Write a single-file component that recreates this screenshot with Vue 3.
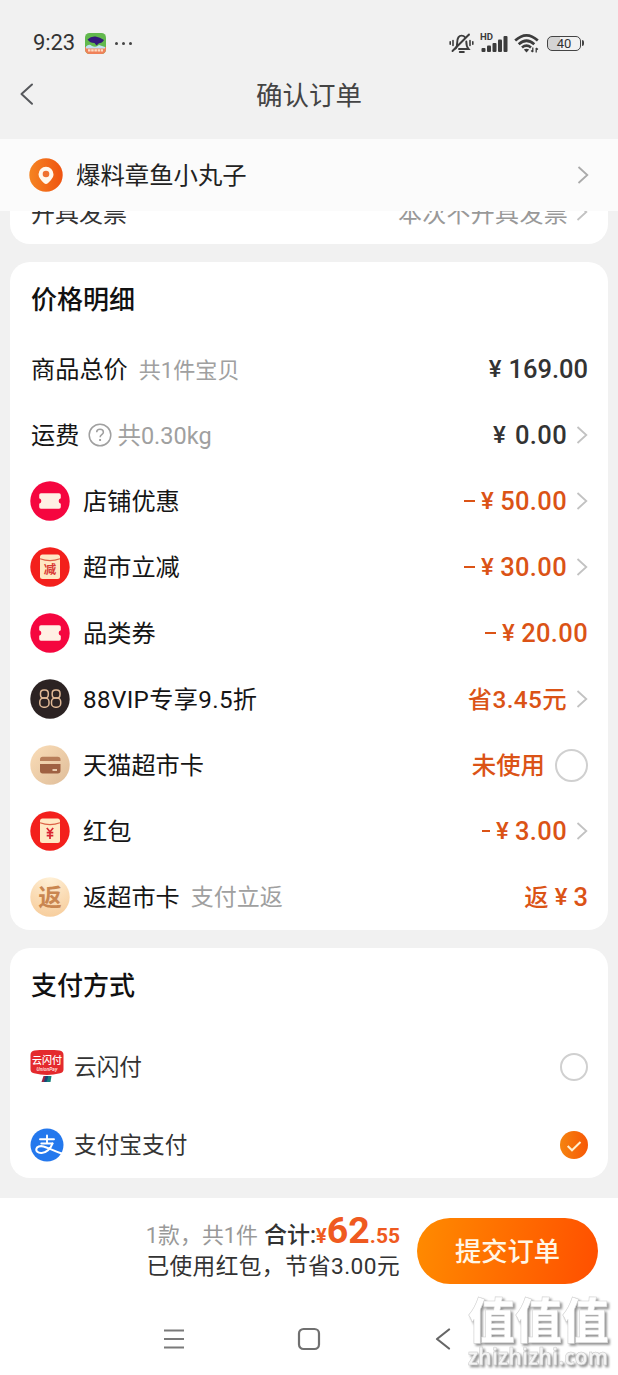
<script setup>
const rows = [
  { label: '商品总价', note: '共1件宝贝', snug: true, yen: true, amount: '169.00', dark: true },
  { label: '运费', help: true, note: '共0.30kg', yen: true, amount: '0.00', dark: true, arrow: true, spread: true },
  { icon: 'ticket', label: '店铺优惠', minus: true, yen: true, amount: '50.00', arrow: true, spread: true },
  { icon: 'jian', label: '超市立减', minus: true, yen: true, amount: '30.00', arrow: true, spread: true },
  { icon: 'ticket', label: '品类券', minus: true, yen: true, amount: '20.00', spread: true },
  { icon: 'vip', label: '88VIP专享9.5折', wide: true, text: '省3.45元', arrow: true, spread: true },
  { icon: 'card', label: '天猫超市卡', text: '未使用', radio: true },
  { icon: 'hongbao', label: '红包', minus: true, yen: true, amount: '3.00', arrow: true, tight: true, spread: true },
  { icon: 'fan', label: '返超市卡', note: '支付立返', text: '返', yen: true, amount: '3', rebate: true },
]
</script>

<template>
  <div class="screen">
    <header class="status">
      <span class="time">9:23</span>
      <svg class="app-icon" width="21" height="21" viewBox="0 0 21 21">
        <rect width="21" height="21" rx="4.500" fill="#62b84e" />
        <path d="M0 14h21v2.500a4.500 4.500 0 0 1-4.500 4.500h-12a4.500 4.500 0 0 1-4.500-4.500z" fill="#f0825a" />
        <path d="M1 13.500q3-3 6-.5 4 2 7-1l6 2v1.500H1z" fill="#bfe0f2" />
        <path d="M2.500 6.500Q6 3 10.500 3.500T19 7q-2 3.300-5 3.300l-2.500 2.200-2-2.500Q5 10 2.500 6.500z" fill="#33187a" />
        <path d="M3 17.300h15" stroke="#fbdcc4" stroke-width="2.200" stroke-dasharray="2.500 .7" />
      </svg>
      <span class="more"><i></i><i></i><i></i></span>
      <div class="status-right">
        <svg width="25" height="22" viewBox="0 0 25 22" fill="none" stroke="#3c3c3c" stroke-width="1.900" stroke-linecap="round">
          <path d="M6.500 16.500c1.600-1.400 1.700-3 1.700-6C8.200 6 9.900 3.600 12.600 3.600c1.500 0 2.600.6 3.400 1.700M17.300 9.500c0 4 .3 5.400 2.200 7.500H10" />
          <path d="M3.500 19 20 2.500" />
          <path d="M10.800 20h4" stroke-width="2" />
          <path d="M4 8.500v5M1.200 9.700v2.600M21 8.500v5M23.800 9.700v2.600" stroke-width="1.600" />
        </svg>
        <svg class="signal" width="28" height="22" viewBox="0 0 28 22" fill="#3c3c3c">
          <text x="0" y="8.300" font-size="9" font-weight="700" font-family="Roboto, sans-serif" textLength="13" lengthAdjust="spacingAndGlyphs">HD</text>
          <rect x="1.500" y="16" width="4" height="4" rx="1" />
          <rect x="7" y="13.500" width="4" height="6.500" rx="1" />
          <rect x="12.500" y="11" width="4" height="9" rx="1" />
          <rect x="18" y="7.500" width="4" height="12.500" rx="1" />
          <rect x="23.500" y="4" width="4" height="16" rx="1" />
        </svg>
        <svg class="wifi" width="26" height="22" viewBox="0 0 26 22" fill="none" stroke="#3c3c3c" stroke-width="2.700">
          <path d="M1.200 8.500Q12.500-1.800 23.800 8.500" />
          <path d="M4.700 12.200Q12.500 5.300 20.300 12.200" />
          <path d="M8 15.500Q12.500 11.800 17 15.500" />
          <path d="M9.800 17.600Q12.500 15.700 15.200 17.600L12.500 20.400z" fill="#3c3c3c" stroke="none" />
          <path d="M18.800 15.500v4.500M18.800 20l-1.700-1.500M22.200 20.400v-4.500M22.200 16l1.700 1.500" stroke-width="1.300" />
        </svg>
        <div class="battery"><span>40</span></div><i class="battery-tip"></i>
      </div>
    </header>

    <div class="nav">
      <svg class="back" width="16" height="24" viewBox="0 0 16 24" fill="none" stroke="#56585c" stroke-width="2" stroke-linecap="round" stroke-linejoin="round"><path d="M13 2.500 2.500 12 13 21.800" /></svg>
      <h1>确认订单</h1>
    </div>

    <section class="address">
      <svg width="34" height="34" viewBox="0 0 34 34">
        <defs><linearGradient id="pinFill" x1="0" x2="1"><stop offset="0" stop-color="#f58422" /><stop offset="1" stop-color="#ef5310" /></linearGradient></defs>
        <circle cx="17" cy="17" r="16.700" fill="url(#pinFill)" />
        <path d="M17 8.700a7.500 7.500 0 0 0-7.500 7.500c0 3.500 2.600 5.900 5.400 8.700q2.100 2 4.200 0c2.800-2.800 5.400-5.200 5.400-8.700A7.500 7.500 0 0 0 17 8.700z" fill="#fff8ee" />
        <circle cx="17" cy="16" r="3.300" fill="#ef7130" />
      </svg>
      <span class="address-name">爆料章鱼小丸子</span>
      <svg class="chev addr-chev" width="12" height="18" viewBox="0 0 12 18"><path d="M1.500 1 10.300 9 1.500 17" /></svg>
    </section>

    <section class="card invoice">
      <div class="invoice-row">
        <span>开具发票</span>
        <span class="invoice-value">本次不开具发票</span>
        <svg class="chev" width="12" height="18" viewBox="0 0 12 18"><path d="M1.500 1 10.300 9 1.500 17" /></svg>
      </div>
    </section>

    <section class="card prices">
      <h2>价格明细</h2>
      <div v-for="row in rows" :key="row.label" class="row">
        <svg v-if="row.icon" class="row-icon" width="40" height="40" viewBox="0 0 40 40">
          <template v-if="row.icon === 'ticket'">
            <circle cx="20" cy="20" r="19.700" fill="#f5063f" />
            <path d="M11 12.200h18a1.800 1.800 0 0 1 1.800 1.800v3.200a2.900 2.900 0 0 0 0 5.600V26a1.800 1.800 0 0 1-1.800 1.800H11A1.800 1.800 0 0 1 9.200 26v-3.200a2.900 2.900 0 0 0 0-5.600V14a1.800 1.800 0 0 1 1.800-1.800z" fill="#fff0e4" />
          </template>
          <template v-else-if="row.icon === 'jian' || row.icon === 'hongbao'">
            <circle cx="20" cy="20" r="19.700" fill="#f3201c" />
            <rect x="10" y="7.500" width="20" height="24.500" rx="2.500" fill="#ffe8c4" />
            <path d="M10 11.800q10 3.600 20 0" fill="none" stroke="#dc6045" stroke-width="1.200" />
            <text v-if="row.icon === 'jian'" x="20" y="27" class="packet-text">减</text>
            <path v-else d="M16.800 17 20 20.800 23.200 17M20 20.800V28M16.700 21.700h6.600M16.700 24.700h6.600" fill="none" stroke="#d92332" stroke-width="1.700" />
          </template>
          <template v-else-if="row.icon === 'vip'">
            <circle cx="20" cy="20" r="19.700" fill="#2c2323" />
            <g fill="none" stroke="#e0b996" stroke-width="1.500">
              <rect x="10.500" y="11" width="7.800" height="8" rx="3.300" /><rect x="9.800" y="19" width="9.200" height="9.200" rx="3.800" />
              <rect x="22.200" y="11" width="7.800" height="8" rx="3.300" /><rect x="21.500" y="19" width="9.200" height="9.200" rx="3.800" />
            </g>
          </template>
          <template v-else-if="row.icon === 'card'">
            <defs><linearGradient id="cardFill" x1="0" x2="1" y1="0" y2="1"><stop offset="0" stop-color="#faddb8" /><stop offset="1" stop-color="#dfbd99" /></linearGradient></defs>
            <circle cx="20" cy="20" r="19.700" fill="url(#cardFill)" />
            <path d="M10 16v-1.500a2.700 2.700 0 0 1 2.700-2.700h15.100a2.700 2.700 0 0 1 2.700 2.700V16z" fill="#b77d59" />
            <path d="M10 19h20.500v6.800a2.700 2.700 0 0 1-2.700 2.700H12.700a2.700 2.700 0 0 1-2.700-2.700z" fill="#9f6142" />
            <path d="M22.500 25h4.500" stroke="#f8dfc2" stroke-width="1.700" />
          </template>
          <template v-else>
            <defs><radialGradient id="fanFill" cx=".5" cy="0" r="1"><stop offset="0" stop-color="#fff0d6" /><stop offset="1" stop-color="#f7ce9e" /></radialGradient></defs>
            <circle cx="20" cy="20" r="19.700" fill="url(#fanFill)" />
            <text x="20" y="28.600" class="fan-text">返</text>
          </template>
        </svg>
        <span class="label" :class="{ wide: row.wide }">{{ row.label }}</span>
        <svg v-if="row.help" class="help" width="24" height="24" viewBox="0 0 24 24" fill="none" stroke="#a0a0a0" stroke-width="1.500">
          <circle cx="12" cy="12" r="10.800" />
          <path d="M8.700 9.300C8.700 7.300 10 6.300 12 6.300s3.400 1.100 3.400 2.900c0 2.300-3.300 2.600-3.300 5" /><path d="M12.100 16v2" stroke-width="1.900" />
        </svg>
        <span v-if="row.note" class="note" :class="{ 'after-help': row.help, snug: row.snug }">{{ row.note }}</span>
        <span class="value" :class="{ dark: row.dark, rebate: row.rebate, spread: row.spread }">
          <i v-if="row.minus" class="minus" :class="{ tight: row.tight }"></i>
          <b v-if="row.text" class="words">{{ row.text }}</b>
          <b v-if="row.yen" class="yen">¥</b>
          <b v-if="row.amount">{{ row.amount }}</b>
        </span>
        <svg v-if="row.arrow" class="chev" width="12" height="18" viewBox="0 0 12 18"><path d="M1.500 1 10.300 9 1.500 17" /></svg>
        <i v-if="row.radio" class="radio large"></i>
      </div>
    </section>

    <section class="card payment">
      <h2>支付方式</h2>
      <div class="pay-row first">
        <svg width="34" height="34" viewBox="0 0 34 34">
          <path d="M4.500.5Q17-1 29.500.5q4 .5 4 4.500v14.500q0 3-3.500 3.800Q17 26.500 4 23.300.5 22.500.5 19.500V5q0-4 4-4.500z" fill="#e42a2d" />
          <text x="17" y="14" class="union">云闪付</text>
          <text x="17" y="20.500" class="union-en">UnionPay</text>
          <path d="M13.500 26h3l-1 6h-4z" fill="#9d2540" /><path d="M15.500 26H19l-1 6h-4z" fill="#174579" /><path d="M18.500 26h3l-1 6h-4z" fill="#15807c" />
        </svg>
        <span>云闪付</span>
        <i class="radio"></i>
      </div>
      <div class="pay-row">
        <svg width="34" height="34" viewBox="0 0 34 34">
          <circle cx="17" cy="17" r="16.500" fill="#2478ed" />
          <g fill="none" stroke="#fff" stroke-linecap="round">
            <path d="M10 11.300h14M17 7.500v7.800M11.300 15.500h11.200" stroke-width="1.900" />
            <path d="M22.500 15.500C20.800 20.500 16 25.500 11 25c-3.300-.2-5-1.800-4.700-3.900.4-2.500 3.800-3.500 7.200-2.600 4.500 1.100 9.200 4.100 18.200 7" stroke-width="2.100" />
          </g>
        </svg>
        <span>支付宝支付</span>
        <svg class="checked" width="28" height="28" viewBox="0 0 28 28">
          <defs><linearGradient id="checkFill" x1="0" x2="1"><stop offset="0" stop-color="#f58410" /><stop offset="1" stop-color="#f75806" /></linearGradient></defs>
          <circle cx="14" cy="14" r="14" fill="url(#checkFill)" /><path d="M7.700 15 12 19.300 20.500 11" fill="none" stroke="#fff0d0" stroke-width="2" />
        </svg>
      </div>
    </section>

    <footer class="footer">
      <div class="checkout">
        <div class="summary">
          <p class="total"><span class="count">1款，共1件</span><span class="sum">合计:</span><b class="cur">¥</b><b class="big">62</b><b class="cents">.55</b></p>
          <p class="saved">已使用红包，节省3.00元</p>
        </div>
        <button class="submit">提交订单</button>
      </div>
      <div class="system">
        <svg width="22" height="22" viewBox="0 0 22 22" stroke="#7a7a7a" stroke-width="2.200"><path d="M1 2.500h20M1 11h20M1 19.500h20" /></svg>
        <svg width="24" height="24" viewBox="0 0 24 24" fill="none" stroke="#707070" stroke-width="2.200"><rect x="2" y="2" width="20" height="20" rx="4.500" /></svg>
        <svg width="16" height="22" viewBox="0 0 16 22" fill="none" stroke="#666" stroke-width="2.200" stroke-linecap="round" stroke-linejoin="round"><path d="M14 1.500 2 11 14 20.500" /></svg>
      </div>
    </footer>

    <svg class="watermark" width="150" height="84" viewBox="0 0 150 84">
      <text x="2" y="45" class="wm-cn" textLength="141" lengthAdjust="spacingAndGlyphs">值值值</text>
      <text x="2" y="72" class="wm-en" textLength="140" lengthAdjust="spacingAndGlyphs">zhizhizhi.com</text>
    </svg>
  </div>
</template>

<style>
html, body { margin: 0; background: #f1f1f1; }
</style>

<style scoped>
.screen { position: relative; width: 618px; height: 1375px; overflow: hidden; background: #f1f1f1; display: flex; flex-direction: column; font-family: Roboto, "Noto Sans CJK SC", sans-serif; color: #151515; }
.screen svg { flex: none; display: block; }
h1, h2, p { margin: 0; }
i { display: block; flex: none; }
.status { height: 50px; box-sizing: border-box; padding: 36px 33px 0 33px; display: flex; align-items: center; flex: none; }
.time { width: 42px; font-size: 22px; line-height: 22px; color: #333; letter-spacing: -.1px; }
.app-icon { margin-left: 10px; }
.more { display: flex; gap: 4px; margin-left: 9px; }
.more i { width: 3px; height: 3px; border-radius: 50%; background: #444; }
.status-right { margin-left: auto; display: flex; align-items: center; }
.signal { margin-left: 6px; }
.wifi { margin-left: 6px; }
.battery { margin-left: 7px; width: 32px; height: 13px; border: 1.500px solid #444; border-radius: 5px; background: linear-gradient(90deg, #d4d4d4 36%, transparent 36%); font-size: 13px; line-height: 14px; text-align: center; color: #333; }
.battery-tip { width: 2px; height: 6px; margin-left: 1px; margin-right: 1px; background: #444; border-radius: 0 2px 2px 0; }
.nav { flex: none; height: 89px; display: flex; justify-content: center; position: relative; }
.back { position: absolute; left: 19px; top: 32px; }
h1 { font-size: 26.500px; line-height: 91px; font-weight: 400; color: #444; }
.address { flex: none; height: 72px; box-sizing: border-box; padding: 0 29px; display: flex; align-items: center; background: #fbfbfb; }
.address-name { margin-left: 13px; font-size: 24.400px; line-height: 34px; padding-top: 2px; color: #222; flex: 1; }
.chev { fill: none; stroke: #c2c2c2; stroke-width: 1.800; }
.addr-chev { stroke: #aaa; }
.card { flex: none; width: 598px; margin: 0 10px; background: #fff; border-radius: 20px; box-sizing: border-box; padding: 0 20px 0 21px; }
.invoice { height: 33px; border-radius: 0 0 20px 20px; overflow: hidden; }
.invoice-row { height: 36px; margin-top: -15px; display: flex; align-items: center; font-size: 24px; line-height: 36px; color: #333; }
.invoice-value { margin-left: auto; margin-right: 8px; color: #999; letter-spacing: .3px; }
.invoice-row .chev { margin-top: -4px; }
.prices { height: 668px; margin-top: 18px; }
.payment { height: 230px; margin-top: 18px; }
h2 { height: 74px; line-height: 77px; font-size: 26px; font-weight: 500; color: #111; }
.row { height: 66px; display: flex; align-items: center; }
.row-icon { margin-left: -1px; margin-right: 13px; }
.label { font-size: 24.200px; line-height: 36px; padding-top: 2px; }
.label.wide { letter-spacing: .35px; }
.note { margin-left: 11px; font-size: 23px; line-height: 36px; padding-top: 2px; color: #a0a0a0; }
.note.snug { font-size: 22.100px; }
.help { margin-left: 9px; }
.note.after-help { margin-left: 5px; font-size: 23.500px; }
.value { margin-left: auto; display: flex; align-items: center; color: #db5316; font-size: 25.500px; line-height: 36px; white-space: nowrap; }
.value b { font-weight: 500; }
.value.spread b { letter-spacing: .35px; }
.value .words { font-size: 24.400px; padding-top: 1px; }
.value .yen { margin-right: 6px; font-size: 24px; }
.value.dark { color: #333; }
.value.dark .yen { margin-right: 7px; }
.value.dark.spread .yen { margin-right: 9px; }
.value.rebate .yen { margin-left: 6px; margin-right: 6px; }
.minus { width: 11px; height: 2px; background: #db5316; margin-right: 6px; }
.minus.tight { width: 8px; }
.row .chev { margin-left: 9px; }
.radio { width: 28px; height: 28px; box-sizing: border-box; border: 2px solid #d0d0d0; border-radius: 50%; margin-left: auto; }
.radio.large { width: 33px; height: 33px; margin-left: 10px; }
.packet-text { font: 700 12.500px "Noto Sans CJK SC", sans-serif; fill: #d83a35; text-anchor: middle; }
.fan-text { font: 700 23.500px "Noto Sans CJK SC", sans-serif; fill: #c98650; text-anchor: middle; }
.pay-row { height: 66px; display: flex; align-items: center; margin-left: -1px; font-size: 22.700px; line-height: 34px; color: #333; }
.pay-row.first { height: 90px; }
.pay-row span { margin-left: 10px; padding-top: 2px; }
.checked { margin-left: auto; }
.union { font: 500 10px "Noto Sans CJK SC", sans-serif; fill: #fff; text-anchor: middle; }
.union-en { font: italic 700 5px Roboto, sans-serif; fill: #ffdcd8; text-anchor: middle; }
.footer { flex: none; height: 177px; margin-top: 20px; background: #fff; }
.checkout { height: 86px; padding: 20px 20px 0 0; box-sizing: border-box; display: flex; justify-content: flex-end; }
.summary { width: 260px; margin-right: 17px; text-align: right; white-space: nowrap; }
.total { height: 34px; display: flex; justify-content: flex-end; align-items: baseline; line-height: 34px; margin-top: -5px; }
.count { font-size: 21.900px; color: #999; margin-right: 6px; }
.sum { font-size: 23px; font-weight: 500; color: #333; }
.cur { font-size: 20px; font-weight: 700; color: #ef5a20; }
.big { font-size: 37.500px; font-weight: 700; color: #ef5a20; }
.cents { font-size: 21px; font-weight: 700; color: #ef5a20; }
.saved { font-size: 22.700px; letter-spacing: .4px; line-height: 34px; color: #333; margin-top: 3px; }
.submit { width: 181px; height: 66px; border: 0; padding: 0 0 2px; border-radius: 33px; background: linear-gradient(100deg, #ff8b00, #ff4f00); color: #fff6e5; font: 500 26.300px/38px "Noto Sans CJK SC", sans-serif; }
.system { padding: 43px 0 0 163px; display: flex; align-items: center; }
.system svg + svg { margin-left: 112px; }
.system svg + svg + svg { margin-left: 114px; }
.watermark { position: absolute; left: 466px; top: 1293px; filter: drop-shadow(2px 2px 1px rgba(90, 90, 90, .65)); }
.wm-cn { font: 900 48px "Noto Sans CJK SC", sans-serif; fill: #fff; stroke: #d2d2d2; stroke-width: .6px; }
.wm-en { font: 700 22.500px "Open Sans", sans-serif; fill: #f4f4f4; stroke: #c8c8c8; stroke-width: .5px; }
</style>
